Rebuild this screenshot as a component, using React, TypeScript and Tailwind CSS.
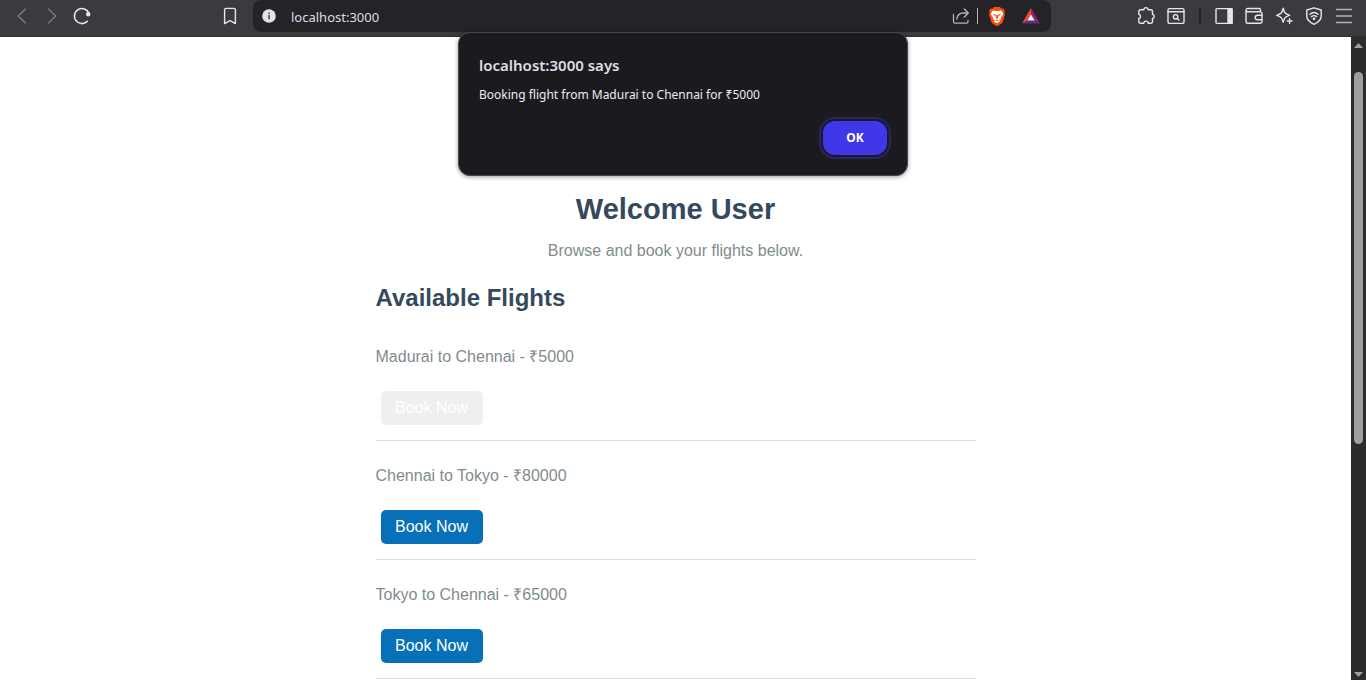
import type { ReactNode } from "react";

type Flight = { id: number; from: string; to: string; price: number; booked: boolean };

const flights: Flight[] = [
  { id: 1, from: "Madurai", to: "Chennai", price: 5000, booked: true },
  { id: 2, from: "Chennai", to: "Tokyo", price: 80000, booked: false },
  { id: 3, from: "Tokyo", to: "Chennai", price: 65000, booked: false },
];

function ToolButton({ label, dim, children }: { label: string; dim?: boolean; children: ReactNode }) {
  return (
    <button
      type="button"
      aria-label={label}
      className={dim ? "size-5 shrink-0 text-[#7c7b80]" : "size-5 shrink-0 text-[#e6e6ea]"}
    >
      <svg
        viewBox="0 0 20 20"
        className="block size-5"
        fill="none"
        stroke="currentColor"
        strokeWidth="1.4"
        strokeLinecap="round"
        strokeLinejoin="round"
      >
        {children}
      </svg>
    </button>
  );
}

function Toolbar() {
  return (
    <header className="flex h-[37px] shrink-0 border-b border-[#313035] bg-[#3b3a3f]">
      <nav aria-label="Navigation" className="flex h-8 w-[253px] shrink-0 items-center gap-[10px] pr-[13px] pl-3">
        <ToolButton label="Back" dim>
          <path d="M13.5 3 6.2 10l7.3 7" />
        </ToolButton>
        <ToolButton label="Forward" dim>
          <path d="M6.5 3l7.3 7-7.3 7" />
        </ToolButton>
        <ToolButton label="Reload">
          <path d="M15.2 15.4A7.5 7.5 0 1 1 16.9 7.4" strokeWidth="1.6" />
          <circle cx="16.2" cy="8.2" r="2.2" fill="currentColor" stroke="none" />
        </ToolButton>
        <span className="flex-1" />
        <ToolButton label="Bookmark">
          <path d="M4.6 17.6V4a1.6 1.6 0 0 1 1.6-1.6h7.6A1.6 1.6 0 0 1 15.4 4v13.600L10 14.600z" />
        </ToolButton>
      </nav>

      <div className="flex h-8 min-w-0 flex-1 items-center rounded-lg bg-[#242328] pr-[10px] pl-[9px]">
        <svg viewBox="0 0 14 14" className="size-[14px] shrink-0" role="img" aria-label="Site information">
          <circle cx="7" cy="7" r="6.8" fill="#e3e3e8" />
          <rect x="6.2" y="6" width="1.7" height="4.3" fill="#55545a" />
          <rect x="6.2" y="3.5" width="1.7" height="1.6" fill="#55545a" />
        </svg>
        <input
          type="text"
          aria-label="Address"
          defaultValue="localhost:3000"
          className="ml-[15px] h-7 min-w-0 flex-1 bg-transparent pt-[2px] font-['Noto_Sans',sans-serif] text-[13px] text-[#dedee3] outline-none"
        />
        <ToolButton label="Share">
          <path
            d="M2.500 8.500v7.200a1.500 1.500 0 0 0 1.500 1.500h11.500a1.500 1.500 0 0 0 1.500-1.500v-1.200M5.800 13.200c.3-4 3-6.200 6.700-6.200h4.200M13.300 3l4 4-4 4"
            stroke="#b5b4ba"
            strokeWidth="1.300"
          />
        </ToolButton>
        <span className="mx-[6px] h-4 w-px bg-[#b5b4ba]" />
        <button type="button" aria-label="Brave Shields" className="ml-[3px] size-5">
          <svg viewBox="0 0 20 20" className="block size-5">
            <path
              d="M7 1h6l1.600 1.800 1.700-.3 1.600 2.300-.5 1.600.6 1.800-2.200 7.300c-.3 1-.8 1.600-1.600 2.200L10.600 20h-1.200l-3.600-2.300c-.8-.6-1.300-1.200-1.600-2.200L2 8.200l.6-1.800-.5-1.600 1.600-2.300 1.700.3z"
              fill="#fb5010"
            />
            <path
              d="M5.800 4.600l2.200.4h4l2.200-.4 1.900 2.600-.7 2.500-1.600 1.900.3 1.500-2.200.9 1.300 1.200L10 17.300l-3.200-2.100 1.300-1.200-2.200-.9.3-1.500-1.600-1.900-.7-2.500z"
              fill="#fff"
            />
            <path
              d="M5.800 7.800l3.100.9-.3 2zM14.200 7.800l-3.100.9.3 2zM9.300 9h1.400l.5 3-1.200.9-1.200-.9zM8.400 14.200l1.600-.7 1.600.7-1.600 1.100z"
              fill="#fb5010"
            />
          </svg>
        </button>
        <button type="button" aria-label="Brave Rewards" className="ml-[14px] size-5">
          <svg viewBox="0 0 20 20" className="block size-5">
            <path d="M10 2 1 17.500l5.500-3L10 7.500z" fill="#fb4a1e" />
            <path d="M10 2l9 15.500-5.500-3L10 7.500z" fill="#9e1f63" />
            <path d="M1 17.500h18l-5.500-3h-7z" fill="#5c2d91" />
            <path d="M10 8.200l3.600 6.300H6.400z" fill="#fff" />
          </svg>
        </button>
      </div>

      <div className="flex h-8 w-[315px] shrink-0 items-center justify-end gap-[10px] pr-3">
        <ToolButton label="Extensions">
          <path d="M4.400 3.800h3.400a2.200 2.200 0 0 1 4.400 0h2.700a1.600 1.600 0 0 1 1.600 1.600v2.800a2.200 2.200 0 0 1 0 4.300v3.200a1.600 1.600 0 0 1-1.600 1.600h-2.700a2.200 2.200 0 0 0-4.400 0H4.400a1.600 1.600 0 0 1-1.600-1.600v-3.200a2.200 2.200 0 0 0 0-4.300V5.400a1.600 1.600 0 0 1 1.600-1.600z" />
        </ToolButton>
        <ToolButton label="Search tabs">
          <rect x="2" y="2.600" width="16" height="14.800" rx="1.500" />
          <path d="M2 5.800h16" />
          <circle cx="9.600" cy="10.800" r="2.200" />
          <path d="M11.300 12.500l1.600 1.600" />
        </ToolButton>
        <span className="mx-[3px] h-4 w-[2px] bg-[#242328]" />
        <ToolButton label="Side panel">
          <rect x="2" y="2.600" width="16" height="14.800" rx="1" />
          <path d="M14 2.600h4v14.800h-4z" fill="currentColor" />
        </ToolButton>
        <ToolButton label="Wallet">
          <path d="M16.500 5.800V4A1.500 1.500 0 0 0 15 2.500H3.800A1.700 1.700 0 0 0 2 4.200v11.300a1.800 1.800 0 0 0 1.800 1.800h12.400a1.800 1.800 0 0 0 1.800-1.800V7.500a1.700 1.700 0 0 0-1.800-1.700H3.800A1.700 1.700 0 0 1 2 4.200" />
          <path d="M18 9.200h-4.500a2.300 2.300 0 0 0 0 4.600H18" />
        </ToolButton>
        <ToolButton label="Assistant">
          <path d="M9.200 2.200c1.300 5 1.800 5.500 6.600 7.100-4.800 1.600-5.300 2.100-6.600 7.100-1.300-5-1.800-5.500-6.600-7.100 4.800-1.600 5.300-2.100 6.600-7.100z" />
          <path d="M15.600 12.300v5.400M12.900 15h5.400" stroke="#3b3a3f" strokeWidth="4" />
          <path d="M15.600 12.600v4.800M13.200 15H18" />
        </ToolButton>
        <ToolButton label="VPN">
          <path d="M10 1.800 17.200 4v6c0 4-3.200 6.500-7.200 8.300C6 16.500 2.800 14 2.800 10V4z" />
          <path d="M5.900 8.200c2.400-2 5.800-2 8.200 0M7.400 10.600c1.600-1.200 3.600-1.200 5.200 0" />
          <circle cx="10" cy="12.800" r=".7" fill="currentColor" />
        </ToolButton>
        <ToolButton label="Menu">
          <path d="M2.500 3.500h15M2.500 10h15M2.500 16.500h15" stroke="#b5b4ba" />
        </ToolButton>
      </div>
    </header>
  );
}

function FlightRow({ flight }: { flight: Flight }) {
  return (
    <li className="border-b border-[#dddddd] pt-[23px] pb-[15px]">
      <p className="text-base text-[#7f8c8d]">
        {`${flight.from} to ${flight.to} - ₹${flight.price}`}
      </p>
      <button
        type="button"
        className={
          flight.booked
            ? "mt-[22px] ml-[5px] block h-[34px] w-[102px] rounded-[5px] bg-[#efefef] text-base text-white"
            : "mt-[22px] ml-[5px] block h-[34px] w-[102px] rounded-[5px] bg-[#0770b9] text-base text-white"
        }
      >
        Book Now
      </button>
    </li>
  );
}

function Scrollbar() {
  return (
    <div aria-hidden="true" className="flex w-[15px] shrink-0 flex-col items-center bg-[#2c2c2c] pt-[6px] pb-[3px]">
      <svg viewBox="0 0 9 5" className="h-[5px] w-[9px] shrink-0">
        <path d="M4.500 0 9 5H0z" fill="#9f9f9f" />
      </svg>
      <div className="mt-6 flex w-[9px] flex-1 flex-col">
        <div className="h-[62%] rounded-full bg-[#9f9f9f]" />
      </div>
      <svg viewBox="0 0 9 5" className="h-[5px] w-[9px] shrink-0">
        <path d="M0 0h9L4.500 5z" fill="#9f9f9f" />
      </svg>
    </div>
  );
}

function AlertDialog() {
  return (
    <div
      role="alertdialog"
      aria-labelledby="alert-title"
      aria-describedby="alert-message"
      className="absolute top-8 left-1/2 w-[450px] -translate-x-1/2 rounded-xl border border-[#48474c] bg-[#1b1a1f] px-5 py-5 font-['Noto_Sans',sans-serif] shadow-[0_1px_4px_rgba(0,0,0,0.4)]"
    >
      <h2 id="alert-title" className="text-[15px] leading-6 font-semibold text-[#dedee3]">
        localhost:3000 says
      </h2>
      <p id="alert-message" className="mt-2 text-xs leading-5 text-[#ececf0]">
        Booking flight from Madurai to Chennai for ₹5000
      </p>
      <div className="mt-4 flex justify-end">
        <button
          type="button"
          className="h-[34px] w-16 rounded-xl bg-[#4037e8] text-xs font-bold text-white ring-2 ring-[#27246a] ring-offset-2 ring-offset-[#1b1a1f]"
        >
          OK
        </button>
      </div>
    </div>
  );
}

export default function App() {
  return (
    <div className="relative flex h-screen flex-col overflow-hidden bg-white">
      <Toolbar />
      <div className="flex min-h-0 flex-1">
        <main className="min-w-0 flex-1 overflow-hidden font-['Liberation_Sans',Arial,sans-serif]">
          <div className="mx-auto max-w-[600px] pt-[154px]">
            <h1 className="text-center text-[29px] leading-9 font-bold text-[#34495e]">Welcome User</h1>
            <p className="mt-3 text-center text-base text-[#7f8c8d]">Browse and book your flights below.</p>
            <h2 className="mt-[19px] text-2xl font-bold text-[#34495e]">Available Flights</h2>
            <ul className="mt-2">
              {flights.map((flight) => (
                <FlightRow key={flight.id} flight={flight} />
              ))}
            </ul>
          </div>
        </main>
        <Scrollbar />
      </div>
      <AlertDialog />
    </div>
  );
}
